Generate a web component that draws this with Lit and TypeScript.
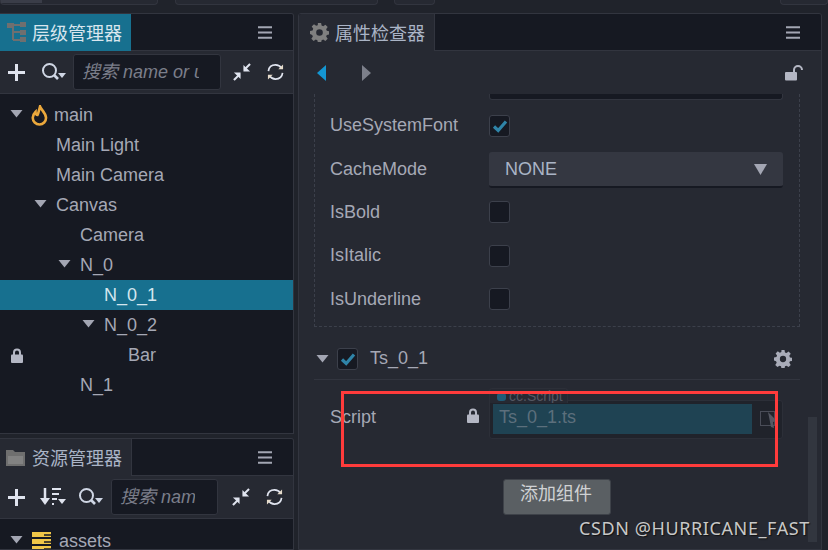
import { LitElement, html, css } from "lit";
import { customElement } from "lit/decorators.js";

const caret = html`<svg class="caret" width="13" height="8" viewBox="0 0 13 8"><path d="M.5 0h12L6.500 7.500z" fill="#a3a6b3"/></svg>`;
const check = html`<svg width="16" height="14" viewBox="0 0 16 14"><path d="M2 7.500l4.200 4L14 2.500" fill="none" stroke="#2f84a8" stroke-width="3.200"/></svg>`;
const burger = html`<svg class="burger" width="14" height="13" viewBox="0 0 14 13"><path d="M0 1.200h14M0 6.500h14M0 11.800h14" stroke="#a3a6b3" stroke-width="2"/></svg>`;
const plus = html`<svg width="17" height="17" viewBox="0 0 17 17"><path d="M8.500 0v17M0 8.500h17" stroke="#dfe3ee" stroke-width="3"/></svg>`;
const search = html`<svg width="25" height="18" viewBox="0 0 25 18"><circle cx="8.500" cy="7.500" r="6.500" fill="none" stroke="#cfd6e4" stroke-width="2"/><path d="M13 12l4 4" stroke="#cfd6e4" stroke-width="2.600"/><path d="M17 10h8l-4 5z" fill="#cfd6e4"/></svg>`;
const collapse = html`<svg width="18" height="18" viewBox="0 0 19 19"><path d="M18 1l-6 6" stroke="#dfe3ee" stroke-width="2.200"/><path d="M11 2v7h7z" fill="#dfe3ee"/><path d="M1 18l6-6" stroke="#dfe3ee" stroke-width="2.200"/><path d="M1 10h7v7z" fill="#dfe3ee"/></svg>`;
const refresh = html`<svg width="17" height="18" viewBox="0 0 18 18" fill="none"><path d="M1.500 8C2 4 5 1.500 9 1.500c3 0 5 1.300 6.500 3.500" stroke="#dfe3ee" stroke-width="1.800"/><path d="M16.500 10c-.5 4-3.500 6.500-7.500 6.500-3 0-5-1.300-6.500-3.500" stroke="#dfe3ee" stroke-width="1.800"/><path d="M12 6h5V1z" fill="#e6dccb"/><path d="M6 12H1v5z" fill="#e6dccb"/></svg>`;
const gear = (c: string, s: number) => html`<svg width=${s} height=${s} viewBox="0 0 20 20"><path fill=${c} fill-rule="evenodd" d="M8.300 0h3.400l.5 2.700 1.700.7 2.300-1.600 2.400 2.400-1.600 2.300.7 1.700 2.700.5v3.400l-2.700.5-.7 1.700 1.600 2.300-2.400 2.400-2.300-1.600-1.700.7-.5 2.700H8.300l-.5-2.700-1.700-.7-2.300 1.600-2.400-2.400 1.600-2.300-.7-1.700L0 11.700V8.300l2.700-.5.700-1.700L1.800 3.800l2.400-2.400 2.300 1.600 1.700-.7zM10 6.500a3.500 3.500 0 100 7 3.500 3.500 0 000-7z"/></svg>`;
const lock = html`<svg width="12" height="15" viewBox="0 0 12 15"><path d="M3 7V4.500a3 3 0 016 0V7" fill="none" stroke="#b4b7c4" stroke-width="2"/><rect x="0" y="6.500" width="12" height="8.500" rx="1" fill="#b4b7c4"/></svg>`;

type Node = { name: string; depth: number; caret?: boolean; sel?: boolean; lock?: boolean; icon?: boolean };
const nodes: Node[] = [
  { name: "main", depth: 0, caret: true, icon: true },
  { name: "Main Light", depth: 1 },
  { name: "Main Camera", depth: 1 },
  { name: "Canvas", depth: 1, caret: true },
  { name: "Camera", depth: 2 },
  { name: "N_0", depth: 2, caret: true },
  { name: "N_0_1", depth: 3, sel: true },
  { name: "N_0_2", depth: 3, caret: true },
  { name: "Bar", depth: 4, lock: true },
  { name: "N_1", depth: 2 },
];

@customElement("app-root")
export class AppRoot extends LitElement {
  static styles = css`
    :host { display: block; width: 828px; height: 550px; overflow: hidden; position: relative; background: #20232b;
      font-family: "Liberation Sans", "Noto Sans CJK SC", sans-serif; font-size: 18px; color: #a5a8b5; }
    * { box-sizing: border-box; }
    i { font-style: normal; }
    .top { height: 13px; display: flex; }
    .stub { height: 5px; border: 1px solid #32353f; border-top: 0; border-radius: 0 0 4px 4px; background: #262932; }
    .s1 { width: 158px; } .s2 { width: 203px; margin-left: 17px; } .s3 { width: 41px; margin-left: 16px; } .s4 { flex: 1; margin-left: 345px; }
    .sliver { width: 41px; height: 3px; background: #3a3d48; }
    .main { display: flex; height: 537px; }
    .left { width: 294px; flex: none; display: flex; flex-direction: column; gap: 4px; }
    .right { width: 524px; margin-left: 4px; flex: none; }
    .panel { background: #262932; border: 1px solid #32353f; border-left: 0; border-radius: 0 3px 0 0; display: flex; flex-direction: column; overflow: hidden; min-height: 0; }
    .p1 { height: 421px; flex: none; }
    .p2 { flex: 1; }
    .p3 { height: 537px; border-left: 1px solid #32353f; border-radius: 3px 3px 0 0; position: relative; }
    .tabbar { height: 37px; flex: none; background: #161922; display: flex; align-items: center; justify-content: space-between; border-bottom: 1px solid #32353f; padding-right: 21px; }
    .tab { height: 37px; display: flex; align-items: center; background: #262932; gap: 5px; color: #aab4c6; }
    .tab.on { background: #17708f; color: #d9e6ee; width: 131px; padding-left: 7px; gap: 6px; }
    .tab.res { width: 132px; padding-left: 6px; border-right: 1px solid #32353f; gap: 7px; }
    .tab.insp { width: 136px; padding-left: 11px; border-right: 1px solid #32353f; gap: 6px; }
    .tab span { font-size: 18px; white-space: nowrap; }
    .tools { height: 43px; flex: none; display: flex; align-items: center; padding-left: 8px; border-bottom: 1px solid #32353f; }
    .t1 svg:nth-child(2) { margin-left: 16px; }
    .t2 svg:nth-child(2) { margin-left: 15px; } .t2 svg:nth-child(3) { margin-left: 12px; }
    .search { height: 36px; background: #161922; border: 1px solid #32353f; border-radius: 3px; color: #7b7e8a; font-style: italic; padding: 0 8px; line-height: 34px; font-size: 18px; }
    .search span { display: block; overflow: hidden; white-space: nowrap; }
    .t1 .search { width: 148px; margin-left: 7px; margin-right: 12px; }
    .t1 .search span { width: 117px; }
    .t2 .search { width: 107px; margin-left: 8px; margin-right: 14px; }
    .t2 .search span { width: 75px; }
    .gap { margin-left: 16px; }
    .tree { flex: 1; background: #161922; padding-top: 6px; overflow: hidden; min-height: 0; }
    .t2tree { padding-top: 7px; }
    .row { height: 30px; position: relative; display: flex; align-items: center; white-space: nowrap; }
    .row.sel { background: #17708f; color: #d4e6ee; }
    .row .lk { position: absolute; left: 11px; top: 7px; }
    .slot { width: 24px; flex: none; padding-left: 2px; display: flex; margin-top: -2px; }
    .flame { margin-left: -1px; margin-right: 6px; }
    .folder { margin: 0 8px 0 0; }
    .nav { height: 43px; flex: none; display: flex; align-items: center; padding: 0 18px 0 18px; justify-content: space-between; }
    .navl { display: flex; gap: 34px; }
    .scroll { flex: 1; position: relative; overflow: hidden; }
    .dash { margin: 0 0 0 15px; width: 486px; height: 233px; border: 1px dashed #3c404b; border-top: 0; }
    .inputstub { margin-left: 174px; width: 294px; height: 6px; background: #161922; border: 1px solid #32353f; border-top: 0; border-radius: 0 0 3px 3px; }
    .prop { height: 43.400px; display: flex; align-items: center; padding-left: 15px; }
    .prop label { width: 159px; flex: none; }
    .first { margin-top: 4px; }
    .cb { width: 21px; height: 22px; background: #161922; border: 1px solid #3c404b; border-radius: 3px; display: flex; align-items: center; justify-content: center; flex: none; }
    .select { width: 294px; height: 36px; background: #343741; border-bottom: 2px solid #161922; border-radius: 3px; display: flex; align-items: center; justify-content: space-between; padding: 0 16px; color: #aab4c6; margin-top: 2px; }
    .comp { margin: 14px 0 0 15px; width: 486px; height: 39px; border-bottom: 1px solid #32353f; display: flex; align-items: center; padding: 0 7px 3px 2px; gap: 8px; }
    .comp .name { margin-left: 4px; flex: 1; }
    .gearbox { display: flex; margin-right: 1px; }
    .sc { margin-top: 9px; display: flex; height: 50px; padding-left: 31px; position: relative; }
    .sc label { width: 137px; margin-top: 18px; }
    .sc .lk { margin-top: 18px; flex: none; }
    .field { margin-left: 10px; margin-top: 11px; width: 294px; height: 39px; background: #20232b; border: 1px solid #2c2f38; border-radius: 3px; padding: 3px 2px 0 3px; display: flex; gap: 8px; }
    .val { width: 259px; height: 30px; background: #1f4353; color: #5c6f7c; padding-left: 6px; line-height: 27px; flex: none; }
    .cursor { margin-top: 7px; flex: none; }
    .tag { position: absolute; left: 190px; top: -1px; width: 79px; height: 15px; background: #262932; border: 1px solid #2c2f38; border-bottom: 0; border-radius: 3px 3px 0 0; font-size: 14px; line-height: 15px; color: #555863; display: flex; gap: 3px; padding-left: 7px; overflow: hidden; }
    .tag b { width: 9px; height: 8px; margin-top: 4px; background: #1f5c78; border-radius: 3px; flex: none; }
    .btnrow { display: flex; padding: 40px 0 0 204px; }
    .btn { width: 108px; height: 36px; background: #5a5f63; border: 1px solid #3e4249; border-radius: 3px; color: #d0d2d4; text-align: center; line-height: 28px; font-size: 18px; padding-right: 2px; }
    .bar { position: absolute; left: 509px; top: 403px; width: 9px; height: 125px; background: #32363f; }
    .redbox { position: absolute; left: 341px; top: 391px; width: 437px; height: 76px; border: 3px solid #ff3b3b; pointer-events: none; }
    .mark { position: absolute; left: 579px; top: 516px; font-family: "Noto Sans", sans-serif; font-size: 18px; color: #c8c8c8; white-space: nowrap; letter-spacing: .6px; text-shadow: 1px 1px 1px #111; }
  `;

  render() {
    return html`
      <div class="top"><div class="stub s1"><div class="sliver"></div></div><div class="stub s2"></div><div class="stub s3"></div><div class="stub s4"></div></div>
      <div class="main">
        <div class="left">
          <section class="panel p1">
            <div class="tabbar"><div class="tab on">
              <svg width="19" height="21" viewBox="0 0 19 21"><path d="M4 3h10M6 3v15M6 10h8M6 18h8" stroke="#6f6f6f" stroke-width="2" fill="none"/><rect x="0" y="1" width="7" height="5" fill="#6f6f6f"/><rect x="13" y="0" width="6" height="5" fill="#6f6f6f"/><rect x="13" y="8" width="6" height="5" fill="#6f6f6f"/><rect x="13" y="15" width="6" height="5" fill="#6f6f6f"/></svg>
              <span>层级管理器</span></div>${burger}</div>
            <div class="tools t1">${plus}${search}<div class="search"><span>搜索 name or u</span></div>${collapse}<i class="gap"></i>${refresh}</div>
            <div class="tree">${nodes.map(n => html`
              <div class="row ${n.sel ? "sel" : ""}" style="padding-left:${8 + n.depth * 24}px">
                ${n.lock ? html`<i class="lk">${lock}</i>` : ""}
                <i class="slot">${n.caret ? caret : ""}</i>
                ${n.icon ? html`<svg class="flame" width="17" height="21" viewBox="0 0 17 21"><path d="M9 1.500c1 3 5.500 6 6 11 .2 4-3 7-6.500 7S1.500 16.500 1.800 12.500C2 10 3.500 8 4.500 7c0 2 1 3 2 3 1-2 1.500-5 2.500-8.500z" fill="none" stroke="#eba83c" stroke-width="2.600"/></svg>` : ""}
                <span>${n.name}</span>
              </div>`)}</div>
          </section>
          <section class="panel p2">
            <div class="tabbar"><div class="tab res">
              <svg width="19" height="17" viewBox="0 0 19 17"><path d="M0 1h7l2 2h10v14H0z" fill="#6f6f6f"/><path d="M2 7h15v8H2z" fill="#828282"/></svg>
              <span>资源管理器</span></div>${burger}</div>
            <div class="tools t2">${plus}
              <svg width="26" height="18" viewBox="0 0 26 18"><path d="M5 0v12" stroke="#dfe3ee" stroke-width="2.500"/><path d="M0 10h10l-5 7z" fill="#dfe3ee"/><path d="M12 1h9M12 6h7M12 11h5M12 16h2" stroke="#dfe3ee" stroke-width="2.200"/><path d="M18 11h8l-4 5z" fill="#dfe3ee"/></svg>
              ${search}<div class="search"><span>搜索 name</span></div>${collapse}<i class="gap"></i>${refresh}</div>
            <div class="tree t2tree"><div class="row" style="padding-left:8px"><i class="slot">${caret}</i>
              <svg class="folder" width="19" height="19" viewBox="0 0 19 19"><path d="M0 0h19v5H0zM0 7h19v5H0zM0 14h19v5H0z" fill="#f0c648"/><path d="M12 3h7M12 10h7M12 17h7" stroke="#161922" stroke-width="1.500"/></svg>
              <span>assets</span></div></div>
          </section>
        </div>
        <div class="right">
          <section class="panel p3">
            <div class="tabbar"><div class="tab insp">${gear("#7f7f7f", 19)}<span>属性检查器</span></div>${burger}</div>
            <div class="nav">
              <div class="navl">
                <svg width="10" height="16" viewBox="0 0 10 16"><path d="M9 0v16L0 8z" fill="#1496d2"/></svg>
                <svg width="10" height="16" viewBox="0 0 10 16"><path d="M1 0v16l9-8z" fill="#7c7f8a"/></svg>
              </div>
              <svg width="18" height="16" viewBox="0 0 18 16"><path d="M9 8V5a4 4 0 018 0" fill="none" stroke="#b4b7c4" stroke-width="2"/><rect x="0" y="7" width="12" height="8.500" rx="1" fill="#b4b7c4"/></svg>
            </div>
            <div class="scroll">
              <div class="dash">
                <div class="inputstub"></div>
                <div class="prop first"><label>UseSystemFont</label><div class="cb">${check}</div></div>
                <div class="prop"><label>CacheMode</label><div class="select"><span>NONE</span>
                  <svg width="13" height="11" viewBox="0 0 13 11"><path d="M0 0h13L6.500 11z" fill="#a3a6b3"/></svg></div></div>
                <div class="prop"><label>IsBold</label><div class="cb"></div></div>
                <div class="prop"><label>IsItalic</label><div class="cb"></div></div>
                <div class="prop"><label>IsUnderline</label><div class="cb"></div></div>
              </div>
              <div class="comp">${caret}<div class="cb">${check}</div><span class="name">Ts_0_1</span><span class="gearbox">${gear("#a9acb9", 18)}</span></div>
              <div class="sc"><label>Script</label><span class="lk">${lock}</span>
                <div class="field"><div class="val">Ts_0_1.ts</div>
                  <svg class="cursor" width="20" height="18" viewBox="0 0 20 18"><rect x=".5" y=".5" width="14" height="14" fill="none" stroke="#4a4d58"/><path d="M8 1l9 9-4 1 1 6-3-1z" fill="#555863"/></svg></div>
                <div class="tag"><b></b>cc.Script</div></div>
              <div class="btnrow"><div class="btn">添加组件</div></div>
            </div>
            <div class="bar"></div>
          </section>
        </div>
      </div>
      <div class="redbox"></div>
      <div class="mark">CSDN @HURRICANE_FAST</div>
    `;
  }
}
